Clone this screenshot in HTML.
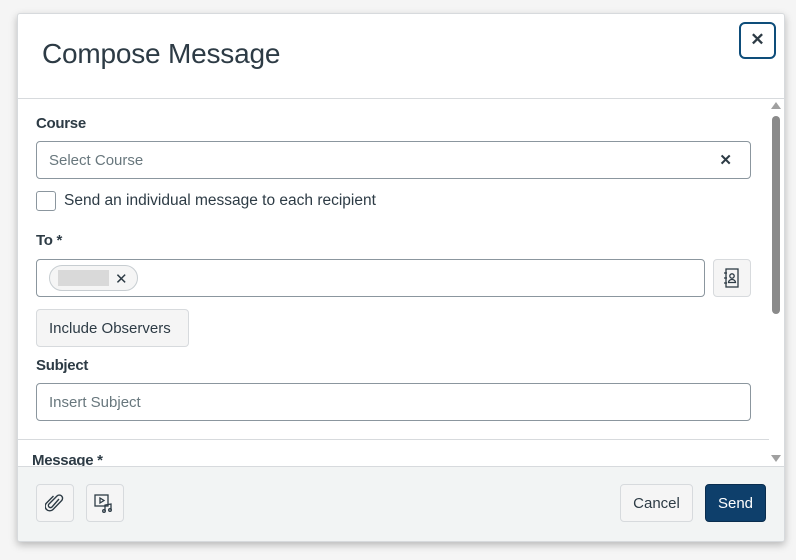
<!DOCTYPE html>
<html><head><style>
*{box-sizing:border-box;margin:0;padding:0}
body{width:796px;height:560px;background:#f5f5f5;font-family:"Liberation Sans",sans-serif;color:#2d3b45;position:relative;overflow:hidden}
.modal{position:absolute;left:17px;top:13px;width:768px;height:529px;background:#fff;border:1px solid #d7dadd;border-radius:3px;box-shadow:0 3px 8px rgba(0,0,0,.25);overflow:hidden}
.abs{position:absolute}
h1{position:absolute;left:24px;top:24px;font-size:28px;font-weight:normal;letter-spacing:-0.2px;color:#2d3b45}
.close{left:721px;top:8px;width:37px;height:37px;border:2px solid #0e4d7a;border-radius:6px;text-align:center;line-height:32px;font-size:17px;font-weight:bold}
.hr{left:0;top:84px;width:766px;height:1px;background:#d7dadd}
.lbl{font-size:15px;font-weight:bold;letter-spacing:-0.3px;color:#2d3b45}
.inp{border:1px solid #8b969e;border-radius:4px;background:#fff;height:38px;font-size:15px;color:#68777d;padding-left:12px;line-height:37px}
.btn{background:#f5f5f5;border:1px solid #d7dadd;border-radius:4px;font-size:15px;text-align:center;color:#2d3b45}
.footer{left:0;top:452px;width:768px;height:78px;background:#f2f4f4;border-top:1px solid #d7dadd}
</style></head><body>
<div class="modal">
<h1>Compose Message</h1>
<div class="abs close">✕</div>
<div class="abs hr"></div>
<div class="abs lbl" style="left:18px;top:101px">Course</div>
<div class="abs inp" style="left:18px;top:127px;width:715px">Select Course<span style="position:absolute;right:18px;color:#2d3b45;font-weight:bold;font-size:15px">✕</span></div>
<div class="abs" style="left:18px;top:177px;width:20px;height:20px;border:1px solid #8b969e;border-radius:3px"></div>
<div class="abs" style="left:46px;top:178px;font-size:15.5px">Send an individual message to each recipient</div>
<div class="abs lbl" style="left:18px;top:218px">To *</div>
<div class="abs inp" style="left:18px;top:245px;width:669px"></div>
<div class="abs" style="left:31px;top:251px;width:89px;height:26px;border:1px solid #c7cdd1;border-radius:13px;background:#f5f5f5"></div>
<div class="abs" style="left:40px;top:256px;width:51px;height:16px;background:#d9d9d9"></div>
<div class="abs" style="left:97px;top:256px;font-size:15px">✕</div>
<div class="abs btn" style="left:695px;top:245px;width:38px;height:38px"></div>
<svg class="abs" style="left:705px;top:254px" width="18" height="20" viewBox="0 0 18 20" fill="none" stroke="#2d3b45" stroke-width="1.3"><rect x="3" y="1" width="12" height="18"/><circle cx="9" cy="8" r="2.2"/><path d="M5.5 14.5a3.5 3 0 0 1 7 0z"/><path d="M1 5h3M1 10h3M1 15h3"/></svg>
<div class="abs btn" style="left:18px;top:295px;width:153px;height:38px;line-height:37px;text-align:left;padding-left:12px">Include Observers</div>
<div class="abs lbl" style="left:18px;top:343px">Subject</div>
<div class="abs inp" style="left:18px;top:369px;width:715px">Insert Subject</div>
<div class="abs" style="left:0;top:425px;width:751px;height:1px;background:#d7dadd"></div>
<div class="abs lbl" style="left:14px;top:438px">Message *</div>
<div class="abs" style="left:752px;top:88px;width:14px;height:364px;background:#fff"></div>
<div class="abs" style="left:753px;top:88px;width:0;height:0;border-left:5px solid transparent;border-right:5px solid transparent;border-bottom:7px solid #a0a0a0"></div>
<div class="abs" style="left:754px;top:102px;width:8px;height:198px;background:#8a8a8a;border-radius:4px"></div>
<div class="abs" style="left:753px;top:441px;width:0;height:0;border-left:5px solid transparent;border-right:5px solid transparent;border-top:7px solid #a0a0a0"></div>
<div class="abs footer"></div>
<div class="abs btn" style="left:18px;top:470px;width:38px;height:38px"></div>
<svg class="abs" style="left:27px;top:479px" width="20" height="20" viewBox="0 0 20 20" fill="none" stroke="#2d3b45" stroke-width="1.4"><path d="M14 6 L7 14 a2 2 0 0 1-3-3 L12 3 a3.2 3.2 0 0 1 4.6 4.6 L8 16.5 a4.5 4.5 0 0 1-6.5-6.5 L8.5 3"/></svg>
<div class="abs btn" style="left:68px;top:470px;width:38px;height:38px"></div>
<svg class="abs" style="left:76px;top:479px" width="22" height="20" viewBox="0 0 22 20" fill="none" stroke="#2d3b45" stroke-width="1.3"><rect x="1" y="2" width="13" height="11"/><path d="M6 5v5l4-2.5z"/><path d="M11 18V12l6-1v6"/><circle cx="10" cy="18" r="1.3"/><circle cx="16" cy="17" r="1.3"/></svg>
<div class="abs btn" style="left:602px;top:470px;width:73px;height:38px;line-height:37px">Cancel</div>
<div class="abs" style="left:687px;top:470px;width:61px;height:38px;line-height:37px;background:#0e3f6b;border:1px solid #0a2d4e;border-radius:4px;color:#fff;font-size:15px;text-align:center">Send</div>
</div>
</body></html>
